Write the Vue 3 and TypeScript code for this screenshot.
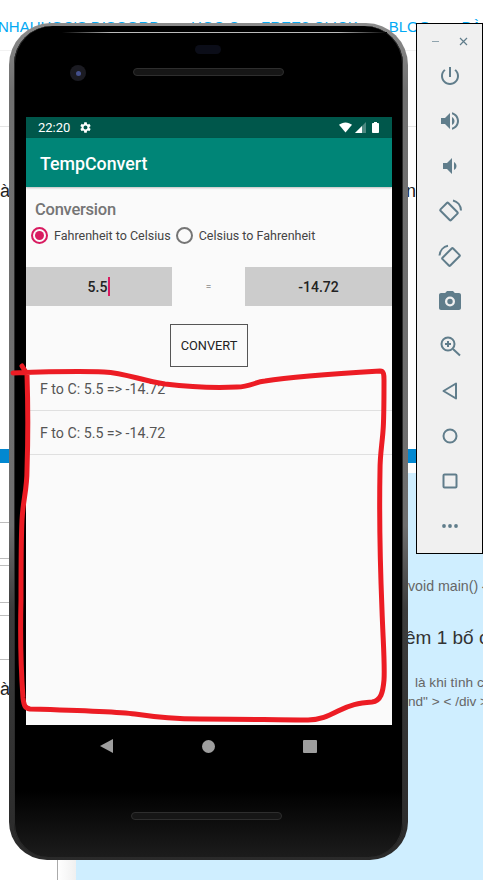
<template>
  <div class="page">
    <!-- web page behind the emulator -->
    <nav class="site-nav">
      <a>NHAUHOC'S DISCORD</a>
      <a>HOC C++ FREE? CLICK</a>
      <a>BLOG</a>
      <a>BÀI</a>
    </nav>
    <div class="rule rule-nav"></div>
    <div class="rule rule-head"></div>
    <div class="frag frag-a">à</div>
    <div class="frag frag-n">n</div>
    <div class="blue-band"></div>
    <div class="side-lines">
      <i v-for="y in sideLines" :key="y" :style="{ top: y + 'px' }"></i>
    </div>
    <div class="frag frag-a2">à</div>
    <div class="light-panel">
      <div class="code-line">void main() {</div>
      <div class="panel-title">êm 1 bố c</div>
      <div class="panel-text indent">là khi tình c</div>
      <div class="panel-text">nd" &gt; &lt; /div &gt;</div>
    </div>
    <div class="left-rail"></div>

    <!-- emulator window -->
    <div class="phone">
      <div class="phone-body">
        <span class="glare"></span>
        <span class="sensor"></span>
        <span class="camera"><b></b></span>
        <span class="speaker speaker-top"></span>
        <div class="screen">
          <div class="status-bar">
            <span class="clock">22:20</span>
            <svg class="gear" viewBox="0 0 24 24"><path d="M19.14 12.94c.04-.3.06-.61.06-.94 0-.32-.02-.64-.07-.94l2.03-1.58c.18-.14.23-.41.12-.61l-1.92-3.32c-.12-.22-.37-.29-.59-.22l-2.39.96c-.5-.38-1.03-.7-1.62-.94l-.36-2.54c-.04-.24-.24-.41-.48-.41h-3.84c-.24 0-.43.17-.47.41l-.36 2.54c-.59.24-1.13.57-1.62.94l-2.39-.96c-.22-.08-.47 0-.59.22L2.74 8.87c-.12.21-.08.47.12.61l2.03 1.58c-.05.3-.09.63-.09.94s.02.64.07.94l-2.03 1.58c-.18.14-.23.41-.12.61l1.92 3.32c.12.22.37.29.59.22l2.39-.96c.5.38 1.03.7 1.62.94l.36 2.54c.05.24.24.41.48.41h3.84c.24 0 .44-.17.47-.41l.36-2.54c.59-.24 1.13-.56 1.62-.94l2.39.96c.22.08.47 0 .59-.22l1.92-3.32c.12-.22.07-.47-.12-.61l-2.01-1.58zM12 15.6c-1.98 0-3.6-1.62-3.6-3.6s1.62-3.6 3.6-3.6 3.6 1.62 3.6 3.6-1.62 3.6-3.6 3.6z"/></svg>
            <span class="status-right">
              <svg class="wifi" viewBox="0 0 14 11"><path d="M0 2.600C1.900 1 4.300 0 7 0s5.100 1 7 2.600L7 11z"/></svg>
              <svg class="signal" viewBox="0 0 11 11"><path d="M11 0v11H0z" fill="#ffffff" fill-opacity=".3"/><path d="M7 4v7H0z"/></svg>
              <svg class="battery" viewBox="0 0 7 11"><path d="M2 0h3v1h1.200c.4 0 .8.4.8.8v8.400c0 .4-.4.8-.8.8H.8c-.4 0-.8-.4-.8-.8V1.800C0 1.400.4 1 .8 1H2z"/></svg>
            </span>
          </div>
          <header class="app-bar">TempConvert</header>
          <main class="content">
            <div class="group-label">Conversion</div>
            <div class="radio-row">
              <label class="radio" v-for="opt in options" :key="opt.id">
                <span class="radio-dot" :class="{ on: mode === opt.id }"></span>
                <span>{{ opt.label }}</span>
              </label>
            </div>
            <div class="fields">
              <div class="field"><span>5.5</span><i class="caret"></i></div>
              <div class="equals">=</div>
              <div class="field">-14.72</div>
            </div>
            <button class="convert">CONVERT</button>
            <ul class="history">
              <li v-for="(item, i) in history" :key="i">{{ item }}</li>
            </ul>
          </main>
        </div>
        <div class="nav-bar">
          <svg class="nav-back" viewBox="0 0 13 14"><path d="M0 7l13-7v14z"/></svg>
          <span class="nav-home"></span>
          <span class="nav-recent"></span>
        </div>
        <span class="speaker speaker-bottom"></span>
      </div>
    </div>

    <aside class="toolbar">
      <div class="win-controls">
        <span class="win-min"></span>
        <svg class="win-close" viewBox="0 0 9 9"><path d="M1 1l7 7M8 1L1 8"/></svg>
      </div>
      <svg v-for="ic in fillIcons" :key="ic" class="tool" viewBox="0 0 24 24"><path :d="ic"/></svg>
      <svg class="tool line" viewBox="0 0 24 24"><rect x="3.500" y="7" width="15" height="11" rx="1" transform="rotate(45 11 12.500)"/><path d="M15 1.500c4.500 1 7.800 5 8 10"/></svg>
      <svg class="tool line" viewBox="0 0 24 24"><rect x="5.500" y="7.500" width="15" height="11" rx="1" transform="rotate(-45 13 13)"/><path d="M10 1.800c-4.600.8-8 4.800-8.500 9.700"/></svg>
      <svg class="tool" viewBox="0 0 24 24"><path fill-rule="evenodd" d="M9 2 7.170 4H3c-1.100 0-2 .9-2 2v13c0 1.100.9 2 2 2h18c1.100 0 2-.9 2-2V6c0-1.100-.9-2-2-2h-4.170L15 2H9zm3 15.500a5 5 0 1 1 0-10 5 5 0 0 1 0 10zm0-2.300a2.700 2.700 0 1 0 0-5.400 2.700 2.700 0 0 0 0 5.400z"/></svg>
      <svg class="tool line" viewBox="0 0 24 24"><circle cx="10" cy="10" r="6.500"/><path d="M10 7v6M7 10h6M15 15l7 6.500"/></svg>
      <svg class="tool line" viewBox="0 0 24 24"><path d="M18 4.500v15L5.500 12z" stroke-linejoin="round"/></svg>
      <svg class="tool line" viewBox="0 0 24 24"><circle cx="12" cy="12" r="6.500"/></svg>
      <svg class="tool line" viewBox="0 0 24 24"><rect x="5.500" y="5.500" width="13" height="13" rx="1"/></svg>
      <svg class="tool" viewBox="0 0 24 24"><circle cx="6" cy="12" r="1.900"/><circle cx="12" cy="12" r="1.900"/><circle cx="18" cy="12" r="1.900"/></svg>
    </aside>

    <!-- hand drawn marker over the screenshot -->
    <svg class="marker" viewBox="0 0 483 880">
      <path d="M22 366L27 374M13 373C40 372 80 371 104 372C125 373 140 380 165 384C190 387 215 388 237 387C250 387 255 382 265 381C290 377 330 374 380 371C384 371 384 375 384 380C384 400 384 420 383 431C382 445 380 455 380 470C379 520 380 560 382 610C383 640 385 665 384 680C383 692 381 701 372 702C358 703 350 705 338 711C328 716 320 720 308 720C280 720 240 719 200 719C170 719 155 717 135 714C120 712 100 711 30 709C25 708 24 706 23 698C21 670 20 640 21 600C21 560 21 540 22 520C23 500 27 490 27 470C28 440 28 405 27 374"/>
    </svg>
  </div>
</template>

<script setup lang="ts">
import { ref } from 'vue'

const mode = ref('f2c')

const options = [
  { id: 'f2c', label: 'Fahrenheit to Celsius' },
  { id: 'c2f', label: 'Celsius to Fahrenheit' }
]

const history = ref(['F to C: 5.5 => -14.72', 'F to C: 5.5 => -14.72'])

const sideLines = [82, 118, 125, 162, 175, 219]

const fillIcons = [
  'M13 3h-2v10h2V3zm4.830 2.170l-1.420 1.420C17.990 7.860 19 9.810 19 12c0 3.870-3.130 7-7 7s-7-3.130-7-7c0-2.190 1.010-4.140 2.580-5.420L6.170 5.170C4.230 6.820 3 9.260 3 12c0 4.970 4.030 9 9 9s9-4.030 9-9c0-2.740-1.230-5.180-3.170-6.830z',
  'M3 9v6h4l5 5V4L7 9H3zm13.500 3c0-1.770-1.020-3.290-2.500-4.030v8.050c1.480-.73 2.500-2.250 2.500-4.020zM14 3.230v2.060c2.890.86 5 3.540 5 6.710s-2.110 5.850-5 6.710v2.060c4.010-.91 7-4.490 7-8.770s-2.990-7.860-7-8.770z',
  'M18.500 12c0-1.770-1.020-3.290-2.500-4.030v8.050c1.480-.73 2.500-2.250 2.500-4.020zM5 9v6h4l5 5V4L9 9H5z'
]
</script>

<style>
html,
body {
  margin: 0;
  background: #fff;
}
</style>

<style scoped>
.page {
  position: relative;
  width: 483px;
  height: 880px;
  overflow: hidden;
  background: #fff;
  font-family: Roboto, "Noto Sans", sans-serif;
}

.site-nav {
  position: absolute;
  top: 18px;
  left: -2px;
  display: flex;
  gap: 31px;
  white-space: nowrap;
  font-family: "Liberation Sans", Arial, sans-serif;
  font-size: 15px;
  color: #03a9f4;
}

.rule {
  position: absolute;
  left: 0;
  right: 0;
  height: 1px;
}

.rule-nav {
  top: 50px;
  background: #f2f2f2;
}

.rule-head {
  top: 126px;
  background: #e4e4e4;
}

.frag {
  position: absolute;
  font-family: "Liberation Sans", Arial, sans-serif;
  color: #222;
}

.frag-a {
  top: 181px;
  left: 0;
  font-size: 18px;
}

.frag-n {
  top: 181px;
  left: 406px;
  font-size: 18px;
}

.frag-a2 {
  top: 679px;
  left: 0;
  font-size: 18px;
}

.blue-band {
  position: absolute;
  top: 449px;
  left: 0;
  right: 0;
  height: 14px;
  background: #0288d1;
}

.side-lines i {
  position: absolute;
  left: 0;
  width: 10px;
  height: 1px;
  margin-top: 440px;
  background: #bdbdbd;
}

.light-panel {
  position: absolute;
  top: 473px;
  left: 76px;
  right: 0;
  bottom: 0;
  padding: 104px 0 0 332px;
  box-sizing: border-box;
  background: #cfeeff;
  font-family: "Liberation Sans", Arial, sans-serif;
  color: #666;
  white-space: nowrap;
}

.code-line {
  font-size: 14.200px;
  line-height: 18px;
}

.panel-title {
  margin: 31px 0 23px -3px;
  font-size: 19px;
  line-height: 24px;
  color: #333;
}

.panel-text {
  font-size: 13.600px;
  line-height: 19px;
}

.panel-text.indent {
  margin-left: 7px;
}

.left-rail {
  position: absolute;
  top: 860px;
  left: 57px;
  bottom: 0;
  width: 19px;
  box-sizing: border-box;
  border-left: 1px solid #aaa;
  background: linear-gradient(to right, #fff, #f0f0f0);
}

.phone {
  position: absolute;
  top: 23px;
  left: 9px;
  width: 399px;
  height: 837px;
  box-sizing: border-box;
  padding: 3px 5px 3px 5px;
  border-radius: 42px 42px 38px 38px;
  background: linear-gradient(to bottom, #8c8c8c 0, #707070 8%, #6e6e6e 60%, #3c3c3c 70%, #2a2a2a 100%);
}

.phone-body {
  position: relative;
  box-sizing: border-box;
  height: 100%;
  padding: 91px 11px 0 12px;
  border-radius: 38px 38px 34px 34px;
  background: linear-gradient(to bottom, #000 0, #000 92%, #1c1c1c 100%);
  box-shadow: inset 1px 0 0 #2b2b2b, inset -1px 0 0 #2b2b2b;
}

.glare {
  position: absolute;
  top: 6px;
  left: 48px;
  right: 16px;
  height: 1px;
  background: linear-gradient(to right, #000, #bbb 15%, #bbb 85%, #000);
}

.sensor {
  position: absolute;
  top: 19px;
  left: 181px;
  width: 26px;
  height: 9px;
  border-radius: 5px;
  background: #0b0d18;
}

.camera {
  position: absolute;
  top: 39px;
  left: 56px;
  width: 16px;
  height: 16px;
  border-radius: 50%;
  display: flex;
  align-items: center;
  justify-content: center;
  background: #1b1b22;
}

.camera b {
  width: 5px;
  height: 5px;
  border-radius: 50%;
  background: #44508c;
}

.speaker {
  position: absolute;
  left: 119px;
  width: 151px;
  height: 8px;
  box-sizing: border-box;
  border: 1px solid #2e2e2e;
  border-radius: 4px;
  background: #161616;
}

.speaker-top {
  top: 42px;
}

.speaker-bottom {
  top: 786px;
  left: 117px;
}

.screen {
  display: flex;
  flex-direction: column;
  height: 608px;
  background: #fafafa;
}

.status-bar {
  display: flex;
  align-items: center;
  flex: none;
  height: 21px;
  padding: 0 13px 0 12px;
  background: #00574b;
  color: #fff;
  font-size: 13px;
}

.gear {
  width: 13px;
  height: 13px;
  margin-left: 9px;
  fill: #fff;
}

.status-right {
  display: flex;
  align-items: center;
  margin-left: auto;
}

.wifi {
  width: 13px;
  height: 11px;
  fill: #fff;
}

.signal {
  width: 11px;
  height: 11px;
  margin-left: 3px;
  fill: #fff;
}

.battery {
  width: 7px;
  height: 11px;
  margin-left: 6px;
  fill: #fff;
}

.app-bar {
  flex: none;
  height: 49px;
  padding-left: 14px;
  line-height: 52px;
  background: #008577;
  color: #fff;
  font-size: 17.800px;
  font-weight: 500;
  box-shadow: 0 1px 2px rgba(0, 0, 0, 0.25);
}

.content {
  display: flex;
  flex-direction: column;
  flex: 1;
}

.group-label {
  margin: 13px 0 0 9px;
  font-size: 16.500px;
  line-height: 20px;
  font-weight: 500;
  letter-spacing: -0.25px;
  color: #757575;
}

.radio-row {
  display: flex;
  margin: 5px 0 0 5px;
}

.radio {
  display: flex;
  align-items: center;
  gap: 6px;
  height: 20px;
  font-size: 12.500px;
  color: #444;
}

.radio + .radio {
  margin-left: 5px;
}

.radio-dot {
  position: relative;
  width: 17px;
  height: 17px;
  box-sizing: border-box;
  border: 2px solid #757575;
  border-radius: 50%;
}

.radio-dot.on {
  border-color: #d81b60;
}

.radio-dot.on::after {
  content: "";
  position: absolute;
  inset: 2px;
  border-radius: 50%;
  background: #d81b60;
}

.fields {
  display: grid;
  grid-template-columns: 146px 1fr 147px;
  margin-top: 22px;
  height: 39px;
}

.field {
  display: flex;
  align-items: center;
  justify-content: center;
  background: #ccc;
  color: #222;
  font-size: 14px;
  font-weight: 500;
}

.caret {
  flex: none;
  width: 2px;
  height: 19px;
  margin-left: 1px;
  background: #d81b60;
}

.equals {
  display: flex;
  align-items: center;
  justify-content: center;
  color: #9e9e9e;
  font-size: 10px;
}

.convert {
  align-self: center;
  width: 78px;
  height: 43px;
  margin: 18px 0 0 0;
  padding: 0;
  border: 1px solid #555;
  background: #fafafa;
  color: #222;
  font-family: inherit;
  font-size: 12.800px;
  font-weight: 400;
}

.history {
  margin: 0;
  padding: 0;
  list-style: none;
}

.history li {
  height: 43px;
  padding-left: 14px;
  line-height: 44px;
  border-bottom: 1px solid #e0e0e0;
  font-size: 14.200px;
  color: #555;
}

.nav-bar {
  display: flex;
  align-items: center;
  height: 42px;
  padding-left: 74px;
}

.nav-back {
  width: 13px;
  height: 14px;
  fill: #9e9e9e;
}

.nav-home {
  width: 13px;
  height: 13px;
  margin-left: 89px;
  border-radius: 50%;
  background: #9e9e9e;
}

.nav-recent {
  width: 14px;
  height: 13px;
  margin-left: 88px;
  border-radius: 1px;
  background: #9e9e9e;
}

.toolbar {
  position: absolute;
  top: 23px;
  left: 416px;
  width: 67px;
  height: 531px;
  box-sizing: border-box;
  display: flex;
  flex-direction: column;
  align-items: center;
  gap: 21px;
  border: 1px solid #000;
  background: #f0f0f0;
}

.win-controls {
  display: flex;
  align-items: center;
  justify-content: space-between;
  width: 36px;
  height: 8px;
  margin: 13px 0 -2px;
}

.win-min {
  width: 7px;
  height: 1px;
  background: #90a4ae;
}

.win-close {
  width: 9px;
  height: 9px;
  stroke: #607d8b;
  stroke-width: 1.200;
  fill: none;
}

.tool {
  flex: none;
  width: 24px;
  height: 24px;
  fill: #607d8b;
}

.tool.line {
  fill: none;
  stroke: #607d8b;
  stroke-width: 2;
}

.marker {
  position: absolute;
  inset: 0;
  width: 483px;
  height: 880px;
  fill: none;
  stroke: #ec1c24;
  stroke-width: 5;
  stroke-linecap: round;
  stroke-linejoin: round;
  pointer-events: none;
}
</style>
